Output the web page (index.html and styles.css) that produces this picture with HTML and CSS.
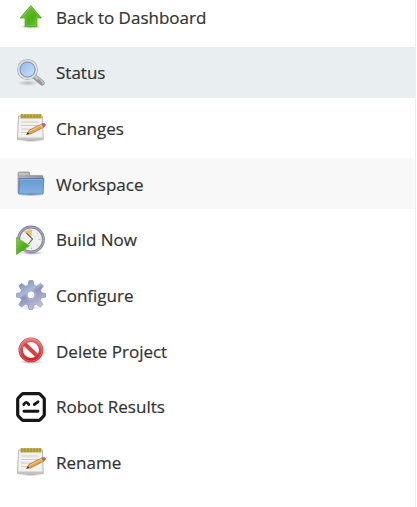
FILE: index.html
```
<!DOCTYPE html>
<html lang="en">
<head>
<meta charset="utf-8">
<title>Project menu</title>
<link rel="stylesheet" href="styles.css">
</head>
<body>
<svg class="defs" width="0" height="0" aria-hidden="true">
  <defs>
    <linearGradient id="green" x2="1" y2="1"><stop stop-color="#8bd34b"/><stop offset=".55" stop-color="#4caf13"/><stop offset="1" stop-color="#69d32d"/></linearGradient>
    <linearGradient id="lens" x2="1" y2="1"><stop stop-color="#8db5e8"/><stop offset="1" stop-color="#d3e5fb"/></linearGradient>
    <linearGradient id="blue" x2="0" y2="1"><stop stop-color="#659ad2"/><stop offset="1" stop-color="#82b0e2"/></linearGradient>
    <linearGradient id="grey" x2="1" y2="1"><stop stop-color="#b9b9b9"/><stop offset="1" stop-color="#777"/></linearGradient>
    <linearGradient id="steel" x2=".6" y2="1"><stop stop-color="#6d86b8"/><stop offset=".45" stop-color="#a9b9d8"/><stop offset=".55" stop-color="#8d91bd"/><stop offset="1" stop-color="#c3c0dc"/></linearGradient>
    <linearGradient id="red" x2="0" y2="1"><stop stop-color="#e87878"/><stop offset="1" stop-color="#d51a20"/></linearGradient>
    <radialGradient id="shade"><stop stop-color="#000" stop-opacity=".38"/><stop offset="1" stop-color="#000" stop-opacity="0"/></radialGradient>
    <symbol id="notepad" viewBox="0 0 30 30">
      <ellipse cx="15" cy="27" rx="14" ry="2.2" fill="url(#shade)"/>
      <path d="M2.500 3h24l.7 23.500H1.500z" fill="#f1f1ee" stroke="#b9b9b6"/>
      <path d="M1.500 24.500h25.700v2H1.500z" fill="#c4c4c0"/>
      <path d="M5.500 9h17M5 12.500h18M5 16h10M5 19.500h8" stroke="#cecece"/>
      <path d="M4.500 1.200h21v4.300h-21z" fill="#bda842"/>
      <path d="M6 1v4M9 1v4M12 1v4M15 1v4M18 1v4M21 1v4M24 1v4" stroke="#93802a" stroke-width=".7"/>
      <path d="M10.500 21.500l2.800-4.400L26 10.900l1.700 3.300L15 20.700z" fill="#e0a34d" stroke="#a87230" stroke-width=".7"/>
      <path d="M13.500 18.300L26 12.100" stroke="#f5cf82"/>
      <path d="M10.500 21.500l1.400-2.200 1.500 1.600z" fill="#333"/>
      <path d="M24.700 11.500l1.600 3.300" stroke="#c8c8c8" stroke-width="1.300"/>
      <path d="M26 10.800q3-1.200 3.400.6t-1.800 2.700z" fill="#df5a48" stroke="#c75243" stroke-width=".5"/>
    </symbol>
  </defs>
</svg>
<nav class="tasks">
  <a class="task"><svg class="icon" viewBox="0 0 30 30">
    <ellipse cx="15" cy="24.600" rx="11" ry="2.400" fill="url(#shade)"/>
    <path d="M14.800 3.500L25.500 16H21v8.500H9V16H4z" fill="url(#green)" stroke="#4da022" stroke-width=".7" stroke-linejoin="round"/>
    <path d="M14.800 5.200L23 15h-3v8.500H10V15H6.300z" fill="none" stroke="#a5e475" stroke-opacity=".35" stroke-width=".8"/>
  </svg><span>Back to Dashboard</span></a>
  <a class="task active"><svg class="icon" viewBox="0 0 30 30">
    <ellipse cx="12" cy="25" rx="11" ry="3" fill="url(#shade)" opacity=".6"/>
    <path d="M18.500 18.500l7.700 6.500" stroke="#929292" stroke-width="5" stroke-linecap="round"/>
    <path d="M18 17.500l8.500 7.200" stroke="#c4c4c4" stroke-width="3" stroke-linecap="round"/>
    <path d="M21.500 21.500l4.500 4" stroke="#999" stroke-width="2"/>
    <circle cx="11.500" cy="11.500" r="9" fill="url(#lens)" stroke="#b2b2b2" stroke-width="3"/>
    <circle cx="11.500" cy="11.500" r="8.900" fill="none" stroke="#dedede" stroke-width="1.700"/>
    <circle cx="11.500" cy="11.500" r="7.500" fill="none" stroke="#6e94c8" stroke-width=".9"/>
  </svg><span>Status</span></a>
  <a class="task"><svg class="icon"><use href="#notepad"/></svg><span>Changes</span></a>
  <a class="task hovered"><svg class="icon" viewBox="0 0 30 30">
    <ellipse cx="15" cy="25.500" rx="14" ry="2" fill="url(#shade)"/>
    <path d="M2 24V4q0-1 1-1h9.500q1 0 1 1v2.500H26q1 0 1 1V24z" fill="url(#grey)" stroke="#929292" stroke-width=".7"/>
    <path d="M3 5h9.500" stroke="#d5d5d5"/>
    <path d="M3.200 9.500h24.600L27 25H2.800z" fill="url(#blue)" stroke="#4b7db9" stroke-width=".8" stroke-linejoin="round"/>
    <path d="M4.200 10.600h22.500" stroke="#8bb6e6" stroke-width=".7"/>
  </svg><span>Workspace</span></a>
  <a class="task"><svg class="icon" viewBox="0 0 30 30">
    <ellipse cx="16" cy="28" rx="12" ry="2" fill="url(#shade)"/>
    <circle cx="15" cy="14.500" r="12.400" fill="#efefed" stroke="#82829f" stroke-width="3"/>
    <circle cx="15" cy="14.500" r="12.500" fill="none" stroke="#a6a6c5" stroke-width="1.200"/>
    <path d="M7.700 6.700q3.500-2.700 8.500-2.500l-1 8z" fill="#e4c66c"/>
    <path d="M10.500 8l6 6-4 5" fill="none" stroke="#666" stroke-width="1.100"/>
    <path d="M24.500 14.300h-1.700M22 7.800l-1 1M22 21.200l-1-1M15.500 24.300v-1.700" stroke="#aaa" stroke-width=".8"/>
    <path d="M.4 12.500L13.500 20.800.4 29.600z" fill="url(#green)" stroke="#4ca022" stroke-width=".6"/>
  </svg><span>Build Now</span></a>
  <a class="task"><svg class="icon" viewBox="0 0 30 30">
    <ellipse cx="15" cy="27.500" rx="11" ry="2" fill="url(#shade)" opacity=".5"/>
    <path fill-rule="evenodd" fill="url(#steel)" stroke="#858baf" stroke-width=".6" stroke-linejoin="round" d="M13 .5h4l1 4.700 2.700 1.100 4-3 2.700 2.700-2.900 4 1.100 2.700 4.100.7v3.600l-4.400.9-1.100 2.600 2.800 4-2.700 2.700-4-2.900-2.600 1.100-1 4H13l-1-4-2.600-1.100-4 2.800-2.700-2.700 2.900-4-1.100-2.600-4.100-.8v-3.600l4.100-.7 1.100-2.700-2.900-4L5.400 3.300l4 3L12 5.200zM15 10.900a3.900 3.900 0 100 7.800 3.900 3.900 0 000-7.800z"/>
    <circle cx="15" cy="14.800" r="4.900" fill="none" stroke="#aeb7d2"/>
  </svg><span>Configure</span></a>
  <a class="task"><svg class="icon" viewBox="0 0 30 30">
    <ellipse cx="15" cy="25.800" rx="12" ry="2.300" fill="url(#shade)"/>
    <circle cx="14.900" cy="13.900" r="10.200" fill="#fff"/>
    <path d="M8 7.300l14 13.500" stroke="#d94046" stroke-width="4"/>
    <circle cx="14.900" cy="13.900" r="10.200" fill="none" stroke="#ce4046" stroke-width="4.400"/>
    <circle cx="14.900" cy="13.900" r="10.200" fill="none" stroke="url(#red)" stroke-width="3.200"/>
    <circle cx="14.900" cy="13.900" r="11.200" fill="none" stroke="#f3a0a0" stroke-width=".7" opacity=".7"/>
  </svg><span>Delete Project</span></a>
  <a class="task"><svg class="icon" viewBox="0 0 30 30">
    <path d="M7.500 1.700h15q1 0 1.700.7l3.400 3.400q.7.700.7 1.700v15q0 1-.7 1.700l-3.400 3.400q-.7.700-1.700.7h-15q-1 0-1.700-.7l-3.400-3.400q-.7-.7-.7-1.700v-15q0-1 .7-1.700l3.400-3.400q.7-.7 1.700-.7z" fill="#fff" stroke="#161616" stroke-width="3.200"/>
    <path d="M7.800 12.500q2.400-4.200 5 0M18.300 12.500l3.700-2.600M8 19.300h14" fill="none" stroke="#161616" stroke-width="2.900" stroke-linecap="round"/>
  </svg><span>Robot Results</span></a>
  <a class="task"><svg class="icon"><use href="#notepad"/></svg><span>Rename</span></a>
</nav>
</body>
</html>
```
FILE: styles.css
```
body {
  margin: 0;
  height: 507px;
  overflow: hidden;
  background: #fff;
  color: #333;
  font-family: "Open Sans", "Noto Sans", sans-serif;
  font-size: 17px;
  font-weight: 500;
  -webkit-text-stroke: .2px #333;
}
.defs {
  position: absolute;
}
.tasks {
  box-sizing: border-box;
  width: 416px;
  height: 516px;
  margin-top: -8.700px;
  border-right: 1px solid #eaeff2;
  display: flex;
  flex-direction: column;
  gap: 4.700px;
}
.task {
  flex: none;
  height: 51px;
  padding-left: 16px;
  display: flex;
  align-items: center;
  gap: 10px;
  white-space: nowrap;
}
.task span {
  padding-top: .7px;
}
.active {
  background: #e9eef1;
}
.hovered {
  background: #f8f8f8;
}
.icon {
  flex: none;
  width: 30px;
  height: 30px;
}
```
